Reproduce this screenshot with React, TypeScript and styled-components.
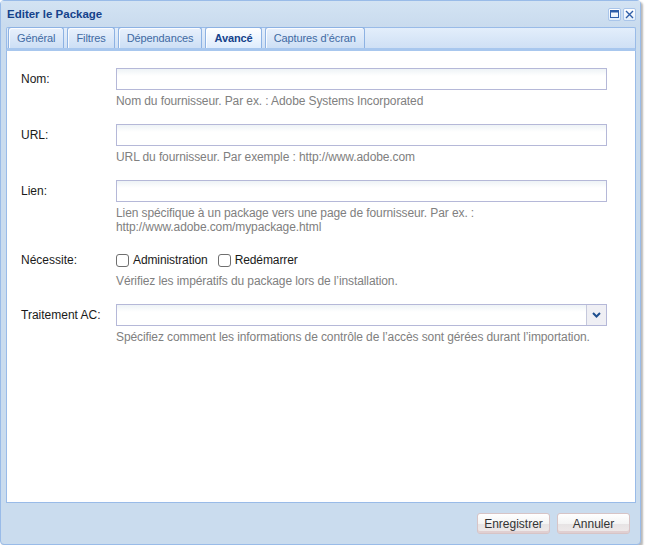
import React from "react";
import styled, { createGlobalStyle } from "styled-components";

const Global = createGlobalStyle`
  html, body { margin: 0; padding: 0; background: #ffffff; }
  body { font-family: "Liberation Sans", Arial, sans-serif; }
  * { box-sizing: border-box; }
`;

const Window = styled.div`
  width: 641px;
  height: 545px;
  display: flex;
  flex-direction: column;
  background: #cadcee;
  border: 1px solid #99bbe8;
  border-radius: 4px;
  box-shadow: 2px 2px 2px rgba(0, 0, 0, 0.28);
`;

const TitleBar = styled.div`
  height: 26px;
  flex: none;
  display: flex;
  align-items: center;
  justify-content: space-between;
  padding: 0 4px 0 6px;
  background: linear-gradient(#d3e3f3, #c9dbee);
`;

const Title = styled.span`
  font-size: 11.5px;
  font-weight: bold;
  color: #15428b;
`;

const Tools = styled.div`
  display: flex;
  gap: 2px;
`;

const ToolButton = styled.div`
  width: 13px;
  height: 13px;
  border: 1px solid #a9c5ea;
  border-radius: 2px;
  background: linear-gradient(#ffffff, #e3eefb);
  display: flex;
  align-items: center;
  justify-content: center;
`;

const Inner = styled.div`
  flex: 1;
  display: flex;
  flex-direction: column;
  margin: 0 4px 0 5px;
`;

const TabStrip = styled.div`
  height: 24px;
  flex: none;
  display: flex;
  align-items: flex-end;
  gap: 3px;
  padding: 0 0 0 1px;
  background: linear-gradient(#e3eefb, #cfe0f5);
  border: 1px solid #99bbe8;
  border-bottom: 3px solid #a8c7ee;
  border-top-left-radius: 2px;
  border-top-right-radius: 2px;
`;

const Tab = styled.div<{ $active?: boolean }>`
  height: 21px;
  padding: 0 8px;
  display: flex;
  align-items: center;
  font-size: 11px;
  letter-spacing: -0.1px;
  font-weight: ${(p) => (p.$active ? "bold" : "normal")};
  color: ${(p) => (p.$active ? "#15428b" : "#416aa3")};
  border: 1px solid #8db2e3;
  border-bottom: none;
  border-radius: 3px 3px 0 0;
  background: ${(p) =>
    p.$active
      ? "linear-gradient(#ffffff, #deecfd)"
      : "linear-gradient(#e9f1fc, #cddff5)"};
  box-shadow: inset 1px 1px 0 rgba(255, 255, 255, 0.8);
`;

const Body = styled.div`
  flex: 1;
  background: #ffffff;
  border: 1px solid #99bbe8;
  border-top: none;
  padding: 17px 28px 0 14px;
  display: flex;
  flex-direction: column;
`;

const Row = styled.div`
  display: grid;
  grid-template-columns: 95px 1fr;
  margin-bottom: 16px;
`;

const Label = styled.div<{ $h?: number }>`
  font-size: 12px;
  color: #1a1a1a;
  height: ${(p) => p.$h ?? 22}px;
  display: flex;
  align-items: center;
`;

const Field = styled.div`
  display: flex;
  flex-direction: column;
  gap: 4px;
`;

const Input = styled.div`
  height: 22px;
  border: 1px solid #b5b8d8;
  background: linear-gradient(#eef3f6, #ffffff 7px);
`;

const Combo = styled.div`
  height: 22px;
  border: 1px solid #b5b8d8;
  background: linear-gradient(#eef3f6, #ffffff 7px);
  display: flex;
  justify-content: flex-end;
`;

const Trigger = styled.div`
  width: 20px;
  height: 100%;
  border-left: 1px solid #c5c8dc;
  background: #efeff4;
  display: flex;
  align-items: center;
  justify-content: center;
`;

const Help = styled.div`
  font-size: 12px;
  line-height: 14px;
  letter-spacing: -0.1px;
  color: #808080;
`;

const Checks = styled.div`
  height: 20px;
  display: flex;
  align-items: center;
  gap: 10px;
`;

const Check = styled.label`
  display: flex;
  align-items: center;
  gap: 4px;
  font-size: 12px;
  letter-spacing: -0.1px;
  color: #1a1a1a;
`;

const Box = styled.span`
  width: 13px;
  height: 13px;
  border: 1px solid #6f6f6f;
  border-radius: 3px;
  background: #fff;
`;

const Footer = styled.div`
  height: 41px;
  flex: none;
  display: flex;
  align-items: center;
  justify-content: flex-end;
  gap: 7px;
  padding: 0 10px 0 0;
`;

const Button = styled.div`
  width: 73px;
  height: 21px;
  border: 1px solid #d7c4c6;
  border-radius: 3px;
  background: linear-gradient(#ffffff 0%, #f4f4f4 50%, #e6e3e4 51%, #efeaea 100%);
  box-shadow: inset 0 -2px 0 #e0cfd1;
  display: flex;
  align-items: center;
  justify-content: center;
  font-size: 12px;
  color: #333;
`;

const fields = [
  { label: "Nom:", help: ["Nom du fournisseur. Par ex. : Adobe Systems Incorporated"] },
  { label: "URL:", help: ["URL du fournisseur. Par exemple : http://www.adobe.com"] },
  {
    label: "Lien:",
    help: [
      "Lien spécifique à un package vers une page de fournisseur. Par ex. :",
      "http://www.adobe.com/mypackage.html",
    ],
  },
];

export default function App() {
  return (
    <>
      <Global />
      <Window>
        <TitleBar>
          <Title>Editer le Package</Title>
          <Tools>
            <ToolButton>
              <svg width="9" height="8" viewBox="0 0 9 8">
                <rect x="0.5" y="0.5" width="8" height="7" fill="none" stroke="#2e5ea8" />
                <rect x="0.5" y="0.5" width="8" height="2" fill="#2e5ea8" />
              </svg>
            </ToolButton>
            <ToolButton>
              <svg width="9" height="9" viewBox="0 0 9 9">
                <path d="M1 1 L8 8 M8 1 L1 8" stroke="#2e5ea8" strokeWidth="1.4" />
              </svg>
            </ToolButton>
          </Tools>
        </TitleBar>
        <Inner>
          <TabStrip>
            <Tab>Général</Tab>
            <Tab>Filtres</Tab>
            <Tab>Dépendances</Tab>
            <Tab $active>Avancé</Tab>
            <Tab>Captures d’écran</Tab>
          </TabStrip>
          <Body>
            {fields.map((f) => (
              <Row key={f.label}>
                <Label>{f.label}</Label>
                <Field>
                  <Input />
                  <Help>
                    {f.help.map((h) => (
                      <div key={h}>{h}</div>
                    ))}
                  </Help>
                </Field>
              </Row>
            ))}
            <Row>
              <Label $h={20}>Nécessite:</Label>
              <Field>
                <Checks>
                  <Check>
                    <Box />
                    Administration
                  </Check>
                  <Check>
                    <Box />
                    Redémarrer
                  </Check>
                </Checks>
                <Help>Vérifiez les impératifs du package lors de l’installation.</Help>
              </Field>
            </Row>
            <Row>
              <Label>Traitement AC:</Label>
              <Field>
                <Combo>
                  <Trigger>
                    <svg width="9" height="6" viewBox="0 0 9 6">
                      <path d="M1 1 L4.5 4.5 L8 1" fill="none" stroke="#1f4f8f" strokeWidth="2" />
                    </svg>
                  </Trigger>
                </Combo>
                <Help>
                  Spécifiez comment les informations de contrôle de l’accès sont gérées durant
                  l’importation.
                </Help>
              </Field>
            </Row>
          </Body>
        </Inner>
        <Footer>
          <Button>Enregistrer</Button>
          <Button>Annuler</Button>
        </Footer>
      </Window>
    </>
  );
}
